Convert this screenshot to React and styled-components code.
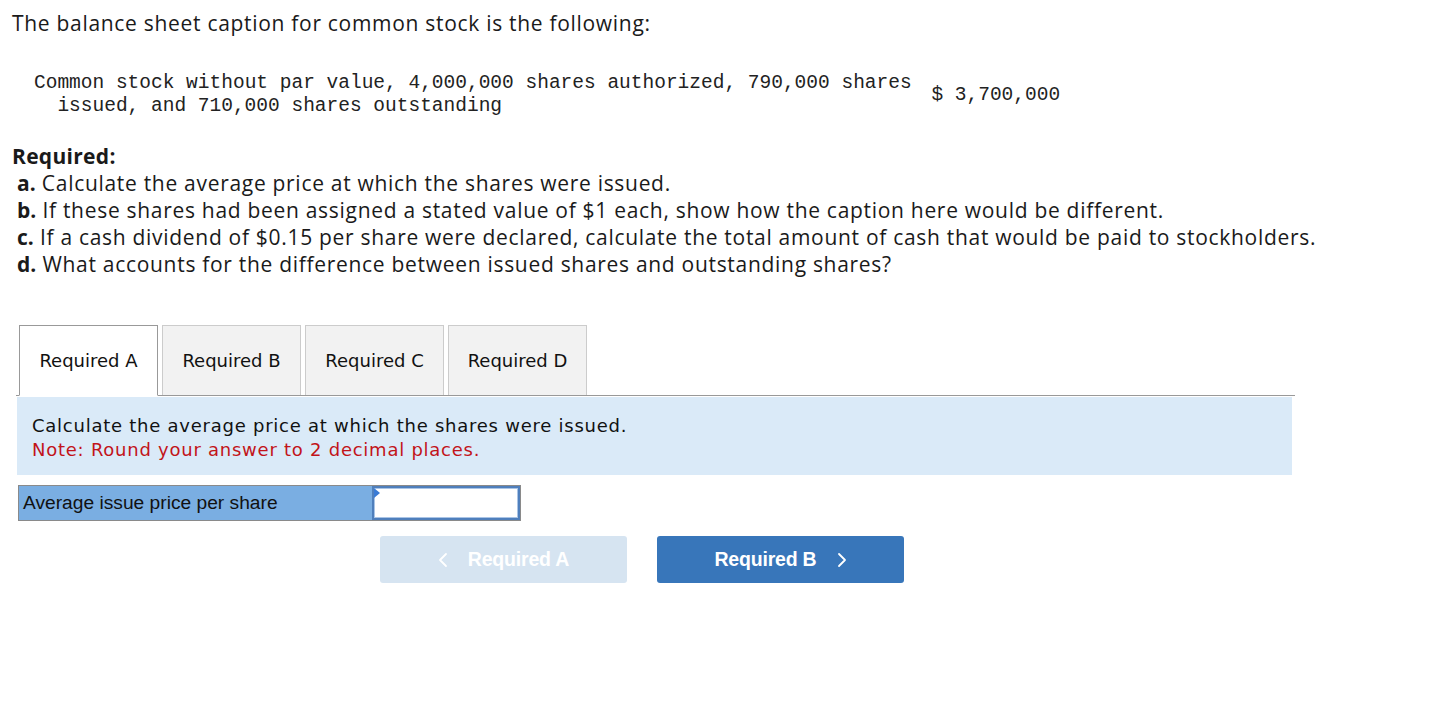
import styled, { createGlobalStyle } from 'styled-components';

const GlobalStyle = createGlobalStyle`
    body {
        margin: 0;
        background: #ffffff;
        color: #1a1a1a;
        font-family: "Open Sans", "Lato", sans-serif;
    }
`;

const Page = styled.div`
    padding: 8px 12px 40px 12px;
`;

const Title = styled.p`
    margin: 0;
    font-size: 21px;
    letter-spacing: 0.7px;
    line-height: 30px;
`;

const CaptionRow = styled.div`
    display: flex;
    align-items: center;
    margin-top: 34px;
    padding-left: 22px;
    font-family: "Liberation Mono", "Courier New", monospace;
    font-size: 19.5px;
    line-height: 23px;
    color: #222;
`;

const CaptionText = styled.div`
    width: 862px;
    padding-left: 2ch;
    text-indent: -2ch;
`;

const Amount = styled.div`
    margin-left: 12px;
`;

const RequiredTitle = styled.h3`
    margin: 25px 0 0 0;
    font-size: 21px;
    letter-spacing: 0.3px;
    font-weight: 700;
    line-height: 27px;
`;

const List = styled.div`
    padding-left: 5px;
    font-size: 21px;
    letter-spacing: 0.7px;
    line-height: 27px;
`;

const Item = styled.div`
    b { font-weight: 700; letter-spacing: 0; }
`;

const TabBar = styled.div`
    display: flex;
    gap: 4px;
    margin: 47px 0 0 4px;
    width: 1276px;
    padding-left: 3px;
    border-bottom: 1px solid #999;
    font-family: "DejaVu Sans", Tahoma, sans-serif;
`;

const Tab = styled.div`
    width: 137px;
    height: 69px;
    display: flex;
    align-items: center;
    justify-content: center;
    font-size: 18px;
    color: #111;
    background: ${p => p.$active ? '#ffffff' : '#f2f2f2'};
    border: 1px solid ${p => p.$active ? '#999' : '#ccc'};
    border-bottom: ${p => p.$active ? '1px solid #fff' : 'none'};
    margin-bottom: ${p => p.$active ? '-1px' : '0'};
`;

const Panel = styled.div`
    margin: 1px 0 0 5px;
    width: 1245px;
    padding: 17px 15px 13px 15px;
    background: #daeaf8;
    font-family: "DejaVu Sans", Tahoma, sans-serif;
    font-size: 18px;
    letter-spacing: 0.75px;
    line-height: 24px;
    color: #111;
`;

const Note = styled.div`
    color: #c2141a;
`;

const AnswerRow = styled.div`
    display: flex;
    margin: 10px 0 0 6px;
    width: 501px;
    height: 34px;
    border: 1px solid #8a8a8a;
`;

const AnswerLabel = styled.div`
    width: 353px;
    display: flex;
    align-items: center;
    padding-left: 4px;
    background: #7aaee2;
    font-family: "Liberation Sans", Arial, sans-serif;
    font-size: 19.2px;
    color: #111;
    box-sizing: border-box;
`;

const AnswerInput = styled.div`
    position: relative;
    flex: 1;
    background: #fff;
    border: 2px solid #4f7fbc;
    box-shadow: inset 0 0 0 1px #a9c4e6;
`;

const Flag = styled.span`
    position: absolute;
    top: 0;
    left: 0;
    width: 0;
    height: 0;
    border-top: 5px solid transparent;
    border-bottom: 5px solid transparent;
    border-left: 6px solid #3a7bd5;
`;

const NavRow = styled.div`
    display: flex;
    gap: 30px;
    margin: 15px 0 0 368px;
`;

const NavButton = styled.div`
    width: 247px;
    height: 47px;
    border-radius: 3px;
    display: flex;
    align-items: center;
    justify-content: center;
    gap: 20px;
    font-family: "Liberation Sans", Arial, sans-serif;
    font-weight: 700;
    font-size: 19.5px;
    letter-spacing: -0.2px;
    color: #fff;
    background: ${p => p.$disabled ? '#d6e4f1' : '#3876ba'};
`;

const Chevron = ({ dir }) => (
    <svg width="10" height="16" viewBox="0 0 10 16" fill="none">
        <path
            d={dir === 'left' ? 'M8 2 L2 8 L8 14' : 'M2 2 L8 8 L2 14'}
            stroke="#fff"
            strokeWidth="1.8"
            strokeLinecap="round"
            strokeLinejoin="round"
        />
    </svg>
);

export default function App(){
    return <Page>
        <GlobalStyle/>
        <Title>The balance sheet caption for common stock is the following:</Title>
        <CaptionRow>
            <CaptionText>Common stock without par value, 4,000,000 shares authorized, 790,000 shares issued, and 710,000 shares outstanding</CaptionText>
            <Amount>$ 3,700,000</Amount>
        </CaptionRow>
        <RequiredTitle>Required:</RequiredTitle>
        <List>
            <Item><b>a.</b> Calculate the average price at which the shares were issued.</Item>
            <Item><b>b.</b> If these shares had been assigned a stated value of $1 each, show how the caption here would be different.</Item>
            <Item><b>c.</b> If a cash dividend of $0.15 per share were declared, calculate the total amount of cash that would be paid to stockholders.</Item>
            <Item><b>d.</b> What accounts for the difference between issued shares and outstanding shares?</Item>
        </List>
        <TabBar>
            <Tab $active>Required A</Tab>
            <Tab>Required B</Tab>
            <Tab>Required C</Tab>
            <Tab>Required D</Tab>
        </TabBar>
        <Panel>
            <div>Calculate the average price at which the shares were issued.</div>
            <Note>Note: Round your answer to 2 decimal places.</Note>
        </Panel>
        <AnswerRow>
            <AnswerLabel>Average issue price per share</AnswerLabel>
            <AnswerInput><Flag/></AnswerInput>
        </AnswerRow>
        <NavRow>
            <NavButton $disabled><Chevron dir="left"/>Required A</NavButton>
            <NavButton>Required B<Chevron dir="right"/></NavButton>
        </NavRow>
    </Page>;
}
